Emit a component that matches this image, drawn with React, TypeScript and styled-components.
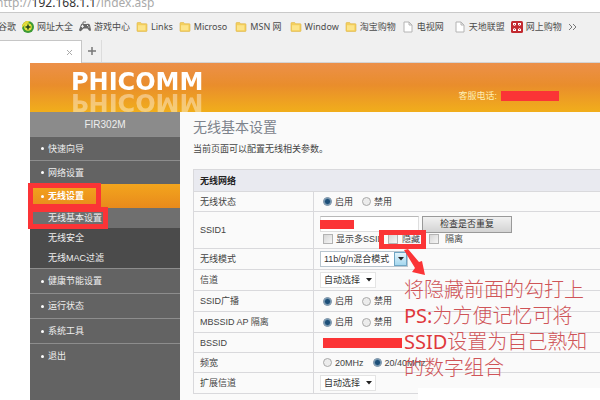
import React from "react";
import styled, { createGlobalStyle, css } from "styled-components";

const RED = "#fb3436";

const GlobalStyle = createGlobalStyle`
  *, *::before, *::after { box-sizing: border-box; }
  body {
    margin: 0;
    background: #fff;
    color: #444;
    font: 9px/12px "Liberation Sans", "Noto Sans CJK SC", sans-serif;
    overflow: hidden;
  }
  ul { list-style: none; margin: 0; padding: 0; }
  a { color: inherit; text-decoration: none; }
`;

const Page = styled.div`
  display: flex;
  flex-direction: column;
  height: 100vh;
`;

const AddressBar = styled.div`
  display: flex;
  align-items: flex-end;
  flex: none;
  height: 13px;
  padding-bottom: 1px;
  border-bottom: 1px solid #c9c9c9;
  overflow: hidden;
  font: 12px/16px "Noto Sans", sans-serif;
  color: #aaa;
  white-space: nowrap;
  span { margin-left: -4px; }
  b { font-weight: 400; color: #333; }
`;

const Bookmarks = styled.nav`
  display: flex;
  align-items: center;
  flex: none;
  gap: 6px;
  height: 27px;
  background: #f0f0f0;
  font-family: "Noto Sans", "Noto Sans CJK SC", sans-serif;
  color: #4c4c4c;
  white-space: nowrap;
  overflow: hidden;
`;

const Bookmark = styled.a<{ $cut?: boolean; $after?: number }>`
  display: flex;
  align-items: center;
  gap: 3px;
  margin-left: ${(p) => (p.$cut ? "-2px" : "0")};
  margin-right: ${(p) => p.$after ?? 0}px;
  svg { flex: none; }
`;

const TabStrip = styled.div`
  display: flex;
  flex: none;
  height: 23px;
  background: #f0f0f0;
  border-bottom: 1px solid #d4d4d4;
`;

const Tab = styled.div`
  display: flex;
  align-items: center;
  justify-content: flex-end;
  width: 82px;
  height: 23px;
  padding-right: 8px;
  background: #fff;
  border: 1px solid #c6c6c6;
  border-width: 1px 1px 0 0;
`;

const IconButton = styled.button`
  display: flex;
  align-items: center;
  justify-content: center;
  padding: 0;
  border: 0;
  background: none;
`;

const NewTab = styled(IconButton)`
  width: 20px;
  border-right: 1px solid #dcdcdc;
`;

const Site = styled.div`
  display: flex;
  flex-direction: column;
  flex: 1;
  min-height: 0;
  margin-left: 30px;
`;

const Banner = styled.header`
  display: flex;
  justify-content: space-between;
  flex: none;
  height: 49px;
  padding: 0 41px;
  overflow: hidden;
  background: linear-gradient(#ec9049, #e98d2c 45%, #f1ae1b);
`;

const Brand = styled.div`
  height: 38px;
  font: 700 24px/38px "DejaVu Sans", sans-serif;
  color: #fff;
  -webkit-box-reflect: below -18px linear-gradient(rgba(255, 255, 255, 0.4), rgba(255, 255, 255, 0.4));
`;

const Hotline = styled.div`
  display: flex;
  align-items: center;
  gap: 4px;
  height: 18px;
  margin-top: 24px;
  color: #fdeeb4;
`;

const Redaction = styled.span<{ $width: number; $height: number }>`
  display: block;
  width: ${(p) => p.$width}px;
  height: ${(p) => p.$height}px;
  background: ${RED};
`;

const Body = styled.div`
  display: flex;
  flex: 1;
  min-height: 0;
`;

const Sidebar = styled.nav`
  flex: none;
  width: 150px;
  background: #636363;
  color: #eee;
`;

const Model = styled.div`
  height: 24px;
  background: #8b8b8b;
  font-size: 10px;
  line-height: 25px;
  text-align: center;
`;

const frame = css<{ $frame?: number }>`
  ${(p) =>
    p.$frame &&
    css`
      position: relative;
      &::after {
        content: "";
        position: absolute;
        z-index: 1;
        top: -1px;
        bottom: -1px;
        left: -2px;
        width: ${p.$frame}px;
        border: 5px solid ${RED};
      }
    `}
`;

const SubItem = styled.a<{ $active?: boolean; $frame?: number }>`
  display: flex;
  align-items: center;
  height: 20px;
  padding-left: 18px;
  background: ${(p) => (p.$active ? "#6f6f6f" : "#4b4b4b")};
  ${frame}
`;

const NavItem = styled.a<{ $active?: boolean; $frame?: number }>`
  display: flex;
  align-items: center;
  gap: 4px;
  height: 24px;
  padding-left: 11px;
  border-top: ${(p) => (p.$active ? "0" : "1px solid #8d8d8d")};
  ${(p) =>
    p.$active &&
    css`
      background: linear-gradient(#f3a51d, #e88a1c);
      color: #fff;
      font-weight: 700;
    `}
  ${SubItem} ~ & { height: 25px; }
  &::before {
    content: "";
    width: 3px;
    height: 3px;
    border-radius: 50%;
    background: #fff;
  }
  ${frame}
`;

const Panel = styled.main`
  position: relative;
  flex: 1;
  min-width: 0;
  padding: 5px 0 0 13px;
  background: #fafafa;
`;

const Title = styled.h1`
  margin: 0;
  font-size: 14px;
  font-weight: 400;
  line-height: 20px;
  color: #7d838c;
`;

const Intro = styled.p`
  margin: 6px 0 14px;
`;

const Settings = styled.table`
  width: 100%;
  border-collapse: collapse;
  border-left: 1px solid #d5d5d8;
  th, td {
    padding: 0 6px;
    border: 1px solid #d9d9dc;
    border-right: 0;
    font-weight: 400;
    text-align: left;
  }
  thead th {
    height: 22px;
    background: #e9eaf0;
    color: #222;
    font-weight: 700;
  }
  tbody th { width: 120px; }
`;

const rowHeights = { slim: 20, normal: 21, tall: 37 };

const Row = styled.tr<{ $size?: keyof typeof rowHeights }>`
  height: ${(p) => rowHeights[p.$size ?? "normal"]}px;
`;

const Options = styled.div<{ $inset?: boolean }>`
  display: flex;
  align-items: center;
  gap: 9px;
  padding-left: ${(p) => (p.$inset ? 3 : 0)}px;
  white-space: nowrap;
`;

const Choice = styled.label`
  display: flex;
  align-items: center;
  gap: 3px;
`;

const Radio = styled.input.attrs({ type: "radio" })`
  appearance: none;
  flex: none;
  width: 9px;
  height: 9px;
  margin: 0;
  border: 1px solid #a9a9a9;
  border-radius: 50%;
  background: #ececec;
  &:checked {
    border-color: #7f93a6;
    background: radial-gradient(circle, #1d4f78 0 2px, #b7cfe0 4px);
  }
`;

const Check = styled.input.attrs({ type: "checkbox" })`
  appearance: none;
  flex: none;
  width: 10px;
  height: 10px;
  margin: 0;
  border: 1px solid #b3b3b3;
  background: linear-gradient(135deg, #d6d6d6, #f6f6f6);
  &:checked { background: #4a7ea5; }
`;

const SsidLine = styled.div`
  display: flex;
  align-items: center;
  gap: 3px;
  height: 17px;
`;

const SsidField = styled.div`
  display: grid;
  align-items: center;
  width: 99px;
  > * { grid-area: 1 / 1; }
`;

const TextInput = styled.input`
  width: 100%;
  height: 16px;
  padding: 0 2px;
  border: 1px solid #dedede;
  border-top-color: #b8b8b8;
  background: #fff;
  font: inherit;
`;

const CheckButton = styled.button`
  width: 90px;
  height: 17px;
  padding: 0;
  border: 1px solid #999;
  background: linear-gradient(#f1f1f1, #d3d3d3);
  color: #333;
  font: inherit;
  line-height: 14px;
`;

const Picker = styled.div<{ $width: number; $lit?: boolean }>`
  display: grid;
  align-items: center;
  width: ${(p) => p.$width}px;
  height: 16px;
  border: 1px solid ${(p) => (p.$lit ? "#b9c6cf" : "#e4e4e4")};
  background: #fff;
  select, span { grid-area: 1 / 1; }
  select {
    appearance: none;
    width: 100%;
    height: 14px;
    padding: 0 0 0 3px;
    border: 0;
    background: none;
    color: #333;
    font: inherit;
  }
  span {
    display: flex;
    align-items: center;
    justify-content: center;
    justify-self: end;
    width: 13px;
    height: 14px;
    pointer-events: none;
    background: ${(p) => (p.$lit ? "linear-gradient(#e3f4fc, #a5d8ef)" : "none")};
    border: ${(p) => (p.$lit ? "1px solid #6fa6c4" : "0")};
  }
`;

const HideChoice = styled(Choice)`
  position: relative;
  gap: 4px;
  margin-left: -5px;
  &::after {
    content: "";
    position: absolute;
    inset: -3px -6px -4px -9px;
    border: 5px solid ${RED};
  }
`;

const IsolateChoice = styled(Choice)`
  gap: 6px;
`;

const Pointer = styled.svg`
  position: absolute;
  z-index: 1;
  left: 223px;
  top: 137px;
`;

const Blank = styled.div`
  position: absolute;
  inset: 276px 0 0 238px;
  background: #fff;
`;

const Note = styled.p`
  position: absolute;
  left: 224px;
  top: 165px;
  margin: 0;
  font: 300 20px/26px "Noto Sans", "Noto Sans CJK SC", sans-serif;
  color: #cf5458;
  white-space: nowrap;
  b { font-weight: 400; color: #e0383c; }
`;

const Folder = () => (
  <svg width="12" height="12" viewBox="0 0 12 12">
    <path d="M1 2.2q0-.7.7-.7h3l1 1.2h4.6q.7 0 .7.7v6.4q0 .7-.7.7H1.7q-.7 0-.7-.7z" fill="#f3cf5e" stroke="#dfb548" strokeWidth=".6" />
    <path d="M2 4.2h7.4v5H2z" fill="#fce48a" />
  </svg>
);

const FileIcon = () => (
  <svg width="12" height="12" viewBox="0 0 12 12">
    <path d="M2 1h5l3 3v7H2zM7 1v3h3" fill="#fff" stroke="#b4b4b4" />
  </svg>
);

const PlusBall = () => (
  <svg width="12" height="12" viewBox="0 0 12 12">
    <circle cx="6" cy="6" r="6" fill="#3c9a35" />
    <path d="M0 7A6 6 0 0 1 8 .4Q6 2 4 3 1.500 5 0 7z" fill="#e9d83a" />
    <circle cx="6" cy="6" r="3.800" fill="#e6e63c" />
    <path d="M6 3.500v5M3.500 6h5" stroke="#20401c" strokeWidth="1.500" />
  </svg>
);

const Gamepad = () => (
  <svg width="12" height="12" viewBox="0 0 12 12">
    <path d="M2 3.500Q3 2 5 3h2.500Q10 2 11 4l1 5q-.5 1.500-2 .5L8.500 7.500h-4L2 10Q.3 10.500 0 9z" fill="#666" />
    <path d="M3.500 3.800v3M2 5.300h3M8 4.500h1M9.300 6h1" stroke="#f0f0f0" />
    <path d="M4 3V1h3" fill="none" stroke="#777" />
  </svg>
);

const ShopIcon = () => (
  <svg width="12" height="12" viewBox="0 0 12 12">
    <rect width="12" height="12" rx="1.500" fill="#c22a30" />
    <path d="M2 2h3v3H4L2 4zM7 2h3v2L8 5H7zM2 8l2-1h1v3H2zM7 7h1l2 1v2H7z" fill="#fff" />
    <path d="M3 3l2 2M9 3L7 5M3 9l2-2M9 9L7 7" stroke="#c22a30" strokeWidth=".8" />
  </svg>
);

const Caret = () => (
  <svg width="6" height="4" viewBox="0 0 6 4">
    <path d="M0 0h6L3 3.500z" fill="#222" />
  </svg>
);

const bookmarks = [
  { text: "谷歌" },
  { text: "网址大全", Icon: PlusBall },
  { text: "游戏中心", Icon: Gamepad },
  { text: "Links", Icon: Folder },
  { text: "Microso", Icon: Folder, after: 2 },
  { text: "MSN 网", Icon: Folder, after: 2 },
  { text: "Window", Icon: Folder },
  { text: "淘宝购物", Icon: Folder },
  { text: "电视网", Icon: FileIcon, after: 4 },
  { text: "天地联盟", Icon: FileIcon },
  { text: "网上购物", Icon: ShopIcon },
];

const RadioPair = ({ name, labels, checked }: { name: string; labels: string[]; checked: number }) => (
  <Options $inset role="radiogroup" aria-label={name}>
    {labels.map((label, i) => (
      <Choice key={label}>
        <Radio name={name} defaultChecked={i === checked} />
        {label}
      </Choice>
    ))}
  </Options>
);

const Select = ({ id, value, width, lit }: { id: string; value: string; width: number; lit?: boolean }) => (
  <Picker $width={width} $lit={lit}>
    <select id={id}>
      <option>{value}</option>
    </select>
    <span><Caret /></span>
  </Picker>
);

export default function App() {
  return (
    <Page>
      <GlobalStyle />
      <AddressBar>
        <span>http://<b>192.168.1.1</b>/index.asp</span>
      </AddressBar>
      <Bookmarks>
        {bookmarks.map(({ text, Icon, after }, i) => (
          <Bookmark key={text} href="#" $cut={i === 0} $after={after}>
            {Icon && <Icon />}
            {text}
          </Bookmark>
        ))}
        <IconButton aria-label="更多书签">
          <svg width="10" height="8" viewBox="0 0 10 8">
            <path d="M1 1l3 3-3 3M5 1l3 3-3 3" fill="none" stroke="#777" />
          </svg>
        </IconButton>
      </Bookmarks>
      <TabStrip>
        <Tab>
          <IconButton aria-label="关闭标签页">
            <svg width="7" height="7" viewBox="0 0 7 7">
              <path d="M1 1l5 5M6 1L1 6" stroke="#aaa" />
            </svg>
          </IconButton>
        </Tab>
        <NewTab aria-label="新标签页">
          <svg width="8" height="8" viewBox="0 0 8 8">
            <path d="M4 0v8M0 4h8" stroke="#777" strokeWidth="1.500" />
          </svg>
        </NewTab>
      </TabStrip>
      <Site>
        <Banner>
          <Brand>PHICOMM</Brand>
          <Hotline>
            客服电话:
            <Redaction $width={58} $height={10} />
          </Hotline>
        </Banner>
        <Body>
          <Sidebar>
            <Model>FIR302M</Model>
            <NavItem href="#">快速向导</NavItem>
            <NavItem href="#">网络设置</NavItem>
            <NavItem href="#" $active $frame={73}>无线设置</NavItem>
            <SubItem href="#" $active $frame={80}>无线基本设置</SubItem>
            <SubItem href="#">无线安全</SubItem>
            <SubItem href="#">无线MAC过滤</SubItem>
            <NavItem href="#">健康节能设置</NavItem>
            <NavItem href="#">运行状态</NavItem>
            <NavItem href="#">系统工具</NavItem>
            <NavItem href="#">退出</NavItem>
          </Sidebar>
          <Panel>
            <Title>无线基本设置</Title>
            <Intro>当前页面可以配置无线相关参数。</Intro>
            <Settings>
              <thead>
                <tr><th colSpan={2}>无线网络</th></tr>
              </thead>
              <tbody>
                <Row $size="slim">
                  <th>无线状态</th>
                  <td><RadioPair name="无线状态" labels={["启用", "禁用"]} checked={0} /></td>
                </Row>
                <Row $size="tall">
                  <th><label htmlFor="ssid">SSID1</label></th>
                  <td>
                    <SsidLine>
                      <SsidField>
                        <TextInput id="ssid" type="text" />
                        <Redaction $width={34} $height={9} />
                      </SsidField>
                      <CheckButton>检查是否重复</CheckButton>
                    </SsidLine>
                    <Options $inset>
                      <Choice><Check />显示多SSID</Choice>
                      <HideChoice><Check />隐藏</HideChoice>
                      <IsolateChoice><Check />隔离</IsolateChoice>
                    </Options>
                  </td>
                </Row>
                <Row>
                  <th><label htmlFor="mode">无线模式</label></th>
                  <td><Select id="mode" value="11b/g/n混合模式" width={88} lit /></td>
                </Row>
                <Row>
                  <th><label htmlFor="channel">信道</label></th>
                  <td><Select id="channel" value="自动选择" width={56} /></td>
                </Row>
                <Row>
                  <th>SSID广播</th>
                  <td><RadioPair name="SSID广播" labels={["启用", "禁用"]} checked={0} /></td>
                </Row>
                <Row>
                  <th>MBSSID AP 隔离</th>
                  <td><RadioPair name="MBSSID AP 隔离" labels={["启用", "禁用"]} checked={0} /></td>
                </Row>
                <Row $size="slim">
                  <th>BSSID</th>
                  <td><Options $inset><Redaction $width={79} $height={10} /></Options></td>
                </Row>
                <Row $size="slim">
                  <th>频宽</th>
                  <td><RadioPair name="频宽" labels={["20MHz", "20/40MHz"]} checked={1} /></td>
                </Row>
                <Row>
                  <th><label htmlFor="extension">扩展信道</label></th>
                  <td><Select id="extension" value="自动选择" width={56} /></td>
                </Row>
              </tbody>
            </Settings>
            <Blank />
            <Pointer width="24" height="27" viewBox="0 0 24 27">
              <path d="M1 1l4-1 11 13 3-1 3 14-13-3 3-4z" fill={RED} />
            </Pointer>
            <Note>
              将隐藏前面的勾打上<br />
              <b>PS:</b>为方便记忆可将<br />
              <b>SSID</b>设置为自己熟知<br />
              的数字组合
            </Note>
          </Panel>
        </Body>
      </Site>
    </Page>
  );
}
